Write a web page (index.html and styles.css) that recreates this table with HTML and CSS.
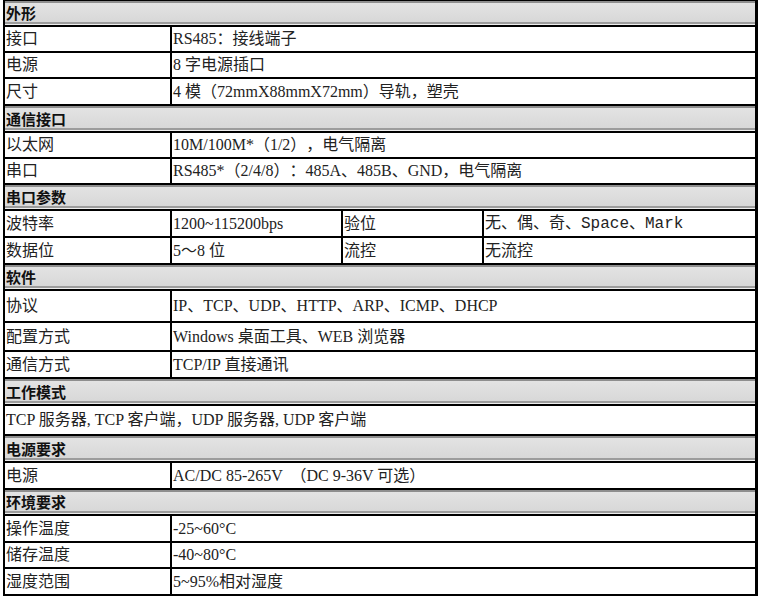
FILE: index.html
```html
<!DOCTYPE html>
<html lang="zh-CN">
<head>
<meta charset="utf-8">
<title>产品参数</title>
<link rel="stylesheet" href="styles.css">
</head>
<body>
<div class="sheet">
  <div class="row head"><div class="cell">外形</div></div>
  <div class="row two"><div class="cell">接口</div><div class="cell">RS485：接线端子</div></div>
  <div class="row two"><div class="cell">电源</div><div class="cell">8 字电源插口</div></div>
  <div class="row two h27"><div class="cell">尺寸</div><div class="cell">4 模（72mmX88mmX72mm）导轨，塑壳</div></div>
  <div class="row head h27"><div class="cell">通信接口</div></div>
  <div class="row two"><div class="cell">以太网</div><div class="cell">10M/100M*（1/2），电气隔离</div></div>
  <div class="row two"><div class="cell">串口</div><div class="cell">RS485*（2/4/8）：485A、485B、GND，电气隔离</div></div>
  <div class="row head"><div class="cell">串口参数</div></div>
  <div class="row four h27"><div class="cell">波特率</div><div class="cell">1200~115200bps</div><div class="cell">验位</div><div class="cell mono">无、偶、奇、Space、Mark</div></div>
  <div class="row four h27"><div class="cell">数据位</div><div class="cell">5～8 位</div><div class="cell">流控</div><div class="cell">无流控</div></div>
  <div class="row head"><div class="cell">软件</div></div>
  <div class="row two h32"><div class="cell">协议</div><div class="cell">IP、TCP、UDP、HTTP、ARP、ICMP、DHCP</div></div>
  <div class="row two h29"><div class="cell">配置方式</div><div class="cell">Windows 桌面工具、WEB 浏览器</div></div>
  <div class="row two h27"><div class="cell">通信方式</div><div class="cell">TCP/IP 直接通讯</div></div>
  <div class="row head h27"><div class="cell">工作模式</div></div>
  <div class="row one h30"><div class="cell">TCP 服务器, TCP 客户端，UDP 服务器, UDP 客户端</div></div>
  <div class="row head h27"><div class="cell">电源要求</div></div>
  <div class="row two h27"><div class="cell">电源</div><div class="cell">AC/DC 85-265V &nbsp;（DC 9-36V 可选）</div></div>
  <div class="row head"><div class="cell">环境要求</div></div>
  <div class="row two h27"><div class="cell">操作温度</div><div class="cell">-25~60°C</div></div>
  <div class="row two"><div class="cell">储存温度</div><div class="cell">-40~80°C</div></div>
  <div class="row two h27"><div class="cell">湿度范围</div><div class="cell">5~95%相对湿度</div></div>
</div>
</body>
</html>
```
FILE: styles.css
```css
html, body {
  margin: 0;
  padding: 0;
  background: #ffffff;
}

body {
  font-family: "Liberation Serif", "Noto Sans CJK SC", serif;
  font-size: 16px;
  color: #222222;
  text-spacing-trim: space-all;
}

.sheet {
  margin-left: 3px;
  width: 755px;
  box-sizing: border-box;
  border-top: 1px solid #000;
  border-left: 2px solid #000;
  border-right: 3px solid #000;
}

.row {
  display: grid;
  height: 26px;
  box-sizing: border-box;
  border-bottom: 2px solid #000;
}

.h27 { height: 27px; }
.h29 { height: 29px; }
.h30 { height: 30px; }
.h32 { height: 32px; }

.one { grid-template-columns: 1fr; }
.two { grid-template-columns: 165px 1fr; }
.four { grid-template-columns: 165px 171px 141px 1fr; }

.cell {
  display: flex;
  align-items: center;
  padding-left: 1px;
  white-space: nowrap;
  overflow: hidden;
  box-sizing: border-box;
  line-height: 1;
}

.cell + .cell {
  border-left: 2px solid #000;
}

.head {
  grid-template-columns: 1fr;
  background: linear-gradient(#e4e4e4, #d6d6d6);
  box-shadow: inset 0 2px 0 #8e8e8e, inset 0 -1px 0 #eeeeee, inset 0 -3px 0 #9c9c9c;
}

.head .cell {
  font-family: "Noto Sans CJK SC", sans-serif;
  font-weight: 700;
  font-size: 15px;
  color: #111;
  padding-left: 1px;
  padding-bottom: 1px;
}

.mono {
  font-family: "Liberation Mono", "Noto Sans CJK SC", monospace;
}
```
